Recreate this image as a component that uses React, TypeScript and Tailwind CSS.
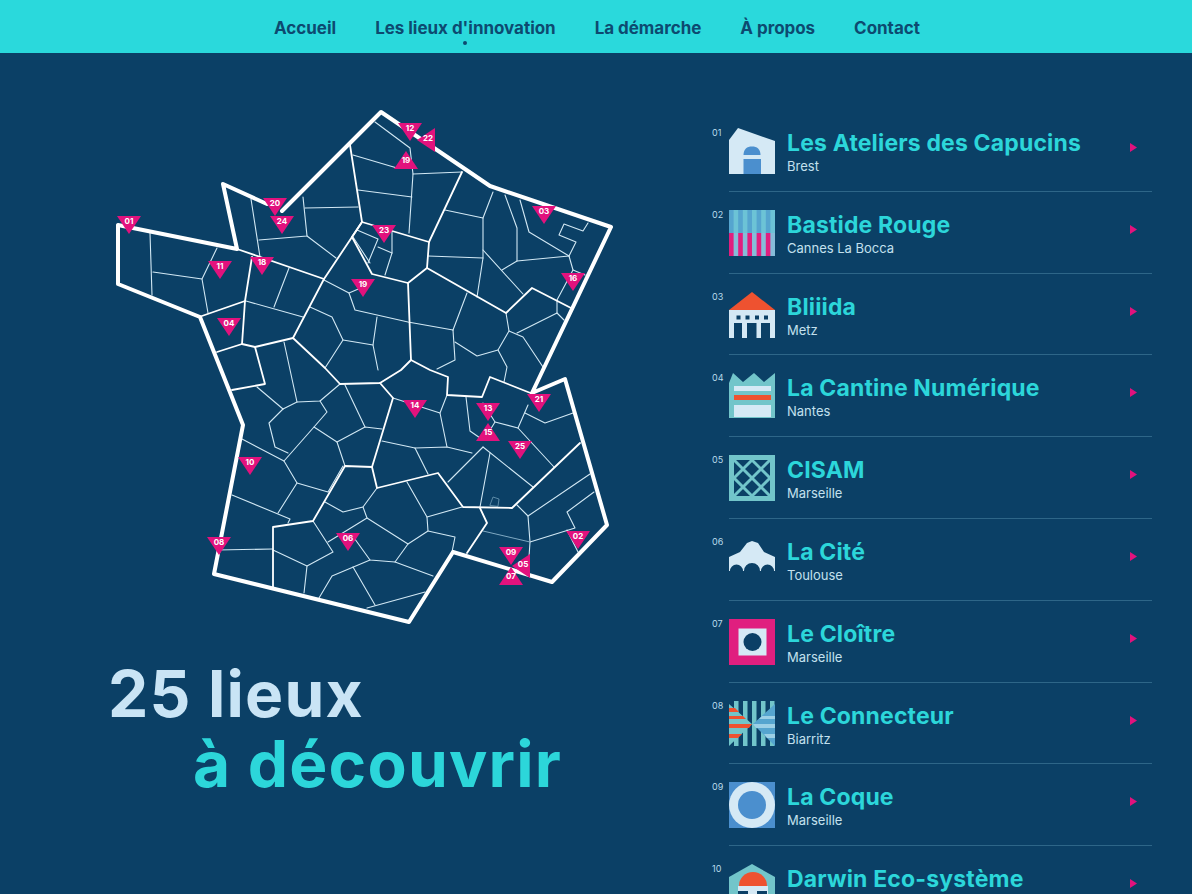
import { ReactNode } from 'react';

const PALE = '#d5e9f5';
const BLUE = '#4b8fce';
const STEEL = '#55a5cf';
const TEAL = '#72c5ca';
const RED = '#ee5230';
const PINK = '#e01f7f';
const NAVY = '#0b4066';

const navItems = ['Accueil', "Les lieux d'innovation", 'La démarche', 'À propos', 'Contact'];

// outer border of the map
const outline = '118,225 237,249 223,184 267,204 M282,211 381,112 490,186 611,227 532,393 565,379 607,525 552,582 453,552 409,622 214,574 243,425 200,317 118,284 118,226';

// regional borders
const mediumLines = [
  '350,145 362,222 429,242 427,268 506,313 532,288 571,308',
  '429,242 462,172',
  '362,222 352,237 372,274 408,283 427,268',
  '408,283 411,360 401,370 380,383 340,384 325,368 293,338 324,279 362,222',
  '411,360 430,370 448,377 447,395 482,397 490,377 533,394',
  '380,383 393,398 372,467 345,466 313,521 273,527 273,587',
  '199,317 245,301 242,344 217,352',
  '242,344 255,347 293,338',
  '255,347 265,384 232,390',
  '245,301 252,257',
  '237,249 324,279',
  '372,467 377,488 438,473 463,507 512,508 580,443',
  '480,508 487,523 467,553',
];

// department borders
const thinLines = [
  '462,172 413,174',
  '150,233 152,295', '153,272 202,279', '217,248 202,279 208,313',
  '251,199 260,257', '259,240 307,236 303,197', '307,236 336,258', '305,208 358,207',
  '289,268 274,307', '246,301 303,317',
  '324,280 349,293 355,310 408,322 453,330', '349,293 363,287',
  '310,307 332,317 343,340 325,368', '343,340 373,345', '377,317 373,345 378,370',
  '353,237 370,263', '357,230 378,239 368,263', '378,247 392,253 385,275', '392,232 392,253',
  '375,122 410,148 413,174 409,233', '358,190 412,197', '353,155 397,168',
  '445,210 483,218 493,192', '483,218 483,258 428,256', '483,258 477,297', '483,250 523,294',
  '505,195 517,228 517,261 502,270', '517,261 569,256', '520,200 529,232 569,256',
  '569,256 576,242 559,235 564,224 583,231 588,223', '569,256 573,270 585,275',
  '573,270 557,300 557,313 564,320', '557,313 517,333',
  '506,313 509,331 523,337 543,367', '509,331 498,350 477,356 455,342',
  '453,330 455,360 437,369', '498,350 507,367 504,382', '467,293 453,330',
  '242,439 284,461 297,483 328,492 343,466',
  '284,461 314,427 337,442 345,466', '337,442 365,427 382,429', '314,427 327,412 320,401',
  '283,409 269,423 275,447 288,453', '283,409 297,402 320,401 340,384', '297,402 284,342', '283,409 257,387',
  '345,385 365,427', '297,483 278,513', '232,495 290,519 288,523', '217,550 273,549',
  '325,502 343,512 363,507 377,488', '363,507 367,518 328,542',
  '367,518 408,544 428,531 427,517 407,482', '427,517 462,507',
  '428,531 455,537 452,552', '408,544 395,562 370,560 352,535',
  '313,521 333,552 307,566 273,550', '307,566 304,593',
  '370,560 332,576 319,598', '353,567 375,605', '395,562 433,576', '367,608 425,592',
  '382,441 415,448 447,447 472,453', '415,448 428,474',
  '393,398 440,413 447,447', '440,413 447,395',
  '466,397 470,431 483,440', '483,447 448,482', '490,453 480,507', '483,447 533,487',
  '483,403 495,422 518,428 554,467', '495,422 487,435', '518,428 528,405',
  '525,413 545,423 573,413',
  '590,474 528,516 517,505', '528,516 530,542 529,557', '530,542 575,528 567,512 594,492', '567,530 578,552',
];

type Pin = { n: string; x: number; y: number; rot?: number };

// x, y = centre of the marker
const pins: Pin[] = [
  { n: '01', x: 129, y: 223 }, { n: '02', x: 578, y: 538 }, { n: '03', x: 544, y: 213 },
  { n: '04', x: 229, y: 325 }, { n: '05', x: 523, y: 566, rot: 90 }, { n: '06', x: 348, y: 540 },
  { n: '07', x: 511, y: 578, rot: 180 }, { n: '08', x: 219, y: 544 }, { n: '09', x: 511, y: 554 },
  { n: '10', x: 250, y: 464 }, { n: '11', x: 220, y: 268 }, { n: '12', x: 410, y: 130 },
  { n: '13', x: 488, y: 410 }, { n: '14', x: 415, y: 407 }, { n: '15', x: 488, y: 434, rot: 180 },
  { n: '16', x: 573, y: 280 }, { n: '19', x: 363, y: 286 }, { n: '18', x: 262, y: 264 },
  { n: '19', x: 406, y: 162, rot: 180 }, { n: '20', x: 275, y: 205 }, { n: '21', x: 539, y: 401 },
  { n: '22', x: 428, y: 140, rot: 90 }, { n: '23', x: 384, y: 232 }, { n: '24', x: 282, y: 223 },
  { n: '25', x: 520, y: 448 },
];

function FranceMap() {
  return (
    <svg viewBox="0 53 712 590" className="block w-[712px] h-[590px]" fill="none" strokeLinejoin="round" strokeLinecap="round">
      {thinLines.map((p, i) => (
        <polyline key={i} points={p} stroke="#d2e8f4" strokeWidth="1.1" />
      ))}
      <polyline points="483,531 530,542" stroke="#7fa9c2" strokeWidth="1" />
      <polygon points="490,505 493,497 499,499 498,506" stroke="#6f9ab5" strokeWidth="0.8" />
      {mediumLines.map((p, i) => (
        <polyline key={i} points={p} stroke="#ffffff" strokeWidth="1.8" />
      ))}
      <path d={`M${outline}`} stroke="#ffffff" strokeWidth="4" />
      {pins.map((p, i) => (
        <g key={i}>
          <polygon
            points={`${p.x - 12},${p.y - 7} ${p.x + 12},${p.y - 7} ${p.x},${p.y + 11}`}
            fill="#e2127d"
            transform={p.rot ? `rotate(${p.rot} ${p.x} ${p.y})` : undefined}
          />
          <text x={p.x} y={p.y + 1} textAnchor="middle" fill="#ffffff" fontSize="8" fontWeight="700" fontFamily="Inter, sans-serif">
            {p.n}
          </text>
        </g>
      ))}
    </svg>
  );
}

const icons: ReactNode[] = [
  <>
    <path d="M0 12 9 0 46 13V46H0Z" fill={PALE} />
    <path d="M14.5 27C14.5 21 18 18.5 23 18.5S31.5 21 31.5 27Z" fill={BLUE} />
    <rect x="14.5" y="31" width="17.5" height="15" fill={BLUE} />
  </>,
  <>
    <rect width="46" height="23" fill="#6cc3d6" />
    <rect y="23" width="46" height="23" fill="#86bcd9" />
    {[0, 9.2, 18.4, 27.6, 36.8].map((x) => (
      <g key={x}>
        <rect x={x} width="4.6" height="23" fill={STEEL} />
        <rect x={x} y="23" width="4.6" height="23" fill={PINK} />
      </g>
    ))}
  </>,
  <>
    <path d="M23 0 46 18H0Z" fill={RED} />
    <path d="M0 18H46V46H41V31H32V46H27.5V31H18V46H13V31H5V46H0Z" fill={PALE} />
    {[7.5, 16.5, 26, 35].map((x) => (
      <rect key={x} x={x} y="23.5" width="4" height="4" fill={NAVY} />
    ))}
  </>,
  <>
    <path d="M0 10 4 0 14 9 25 0 35 9 46 0V45H0Z" fill={TEAL} />
    <rect x="5" y="13" width="37" height="5" fill={PALE} />
    <rect x="5" y="22" width="37" height="5" fill={RED} />
    <rect x="5" y="32" width="37" height="12" fill={PALE} />
  </>,
  <>
    <rect width="46" height="46" fill={TEAL} />
    <rect x="5" y="5" width="36" height="36" fill={NAVY} />
    <path d="M5 23 23 5 41 23 23 41ZM5 5 41 41M41 5 5 41" stroke={TEAL} strokeWidth="3" fill="none" />
  </>,
  <path
    d="M0 20 11 15 18 6 23 4 29 6 35 15 46 20V34H45A6.5 6.5 0 0 0 32 34H31A8 8 0 0 0 15 34H14A6.5 6.5 0 0 0 1 34H0Z"
    fill={PALE}
  />,
  <>
    <rect width="46" height="46" fill={PINK} />
    <rect x="9.5" y="9.5" width="28" height="27" fill={PALE} />
    <circle cx="23.5" cy="23" r="9" fill={NAVY} />
  </>,
  <>
    {[0, 9, 18, 27, 36].map((x) => (
      <rect key={x} x={x + 5} width="4.5" height="45" fill={TEAL} />
    ))}
    <path d="M0 3 23 23 0 45Z" fill={TEAL} />
    <path d="M0 7H6L10 11H0ZM0 15H14L17 18H0ZM0 23H23L20 27H0ZM0 33H13L9 37H0Z" fill={RED} />
    <path d="M46 3 24 23 46 45Z" fill={STEEL} />
    <path d="M46 15H33L30 18H46ZM46 23H24L27 27H46ZM46 33H35L38 37H46Z" fill="#9cd0e6" />
  </>,
  <>
    <rect width="46" height="46" fill={BLUE} />
    <circle cx="23" cy="23" r="23" fill={PALE} />
    <circle cx="23" cy="23" r="14" fill={BLUE} />
  </>,
  <>
    <path d="M23 0 46 13V46H0V13Z" fill={TEAL} />
    <rect x="9" y="22" width="30" height="24" fill={PALE} />
    <path d="M10 22A14 14 0 0 1 38 22Z" fill={RED} />
    <rect x="9" y="27" width="10" height="19" fill={NAVY} />
    <rect x="28" y="27" width="10" height="19" fill={NAVY} />
  </>,
];

const places = [
  { n: '01', name: 'Les Ateliers des Capucins', city: 'Brest' },
  { n: '02', name: 'Bastide Rouge', city: 'Cannes La Bocca' },
  { n: '03', name: 'Bliiida', city: 'Metz' },
  { n: '04', name: 'La Cantine Numérique', city: 'Nantes' },
  { n: '05', name: 'CISAM', city: 'Marseille' },
  { n: '06', name: 'La Cité', city: 'Toulouse' },
  { n: '07', name: 'Le Cloître', city: 'Marseille' },
  { n: '08', name: 'Le Connecteur', city: 'Biarritz' },
  { n: '09', name: 'La Coque', city: 'Marseille' },
  { n: '10', name: 'Darwin Eco-système', city: '' },
];

function App() {
  return (
    <div className="h-screen overflow-hidden bg-[#0b4066] font-['Inter',sans-serif]">
      {/* Nav */}
      <header className="h-[53px] bg-[#2ad9dc] flex items-center justify-center gap-[39px] pl-[2px] pt-[5px]">
        {navItems.map((item, i) => (
          <a key={item} className="relative text-[17px] font-bold tracking-[-0.03px] text-[#0d4a70]">
            {item}
            {i === 1 && (
              <span className="absolute left-[88px] -bottom-[3px] w-[4px] h-[4px] rounded-full bg-[#0d4a70]" />
            )}
          </a>
        ))}
      </header>

      <main className="flex">
        {/* Map and title */}
        <section className="w-[712px] shrink-0">
          <FranceMap />
          <h1 className="pl-[108px] text-[64px] leading-[70px] font-bold tracking-[1.2px] mt-[16px]">
            <span className="block text-[#c9e4f5]">25 lieux</span>
            <span className="block pl-[85px] text-[#2cd6da]">à découvrir</span>
          </h1>
        </section>

        {/* List */}
        <ul className="w-[440px] pt-[57px]">
          {places.map((place, i) => (
            <li key={place.n} className="flex h-[81.8px]">
              <span className="w-[17px] mt-[17px] text-[9px] leading-[11px] text-[#b9dbeb]">{place.n}</span>
              <div className="flex-1 flex border-b border-[#2e6688] pt-[18px] pr-[15px]">
                <svg viewBox="0 0 46 46" className="w-[46px] h-[46px] shrink-0">
                  {icons[i]}
                </svg>
                <div className="ml-[12px] flex-1">
                  <div className="text-[23px] leading-[30px] font-bold tracking-[0.16px] text-[#2cd6da]">{place.name}</div>
                  {place.city && (
                    <div className="text-[13px] leading-[16px] text-[#c3e0ee]">{place.city}</div>
                  )}
                </div>
                <svg viewBox="0 0 7 9" className="w-[7px] h-[9px] mt-[15px] shrink-0">
                  <path d="M0 0 7 4.5 0 9Z" fill="#e2127d" />
                </svg>
              </div>
            </li>
          ))}
        </ul>
      </main>
    </div>
  );
}

export default App;
